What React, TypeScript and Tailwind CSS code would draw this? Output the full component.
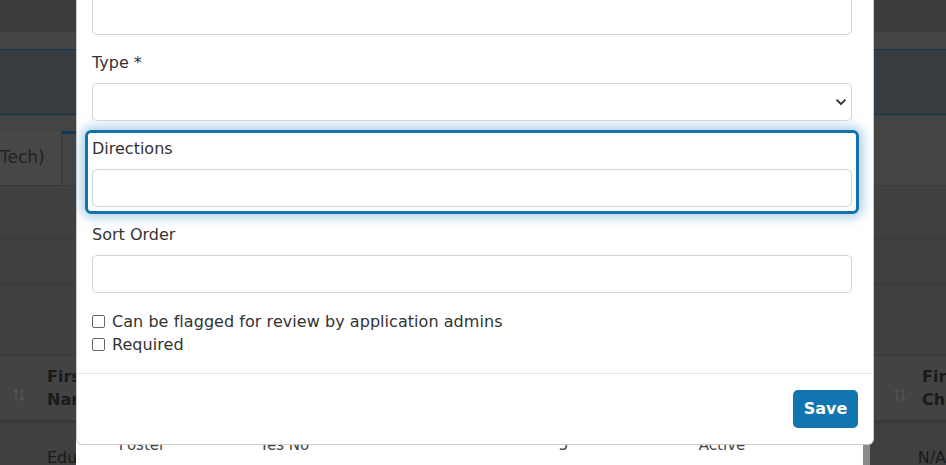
import React from "react";

function SortArrows({ className }: { className?: string }) {
  return (
    <svg className={className} width="14" height="14" viewBox="0 0 14 14" fill="none" stroke="#5a5a5a" strokeWidth="1">
      <path d="M4 13V1.5M1.5 4L4 1.5L6.5 4" />
      <path d="M10 1v11.5M7.5 10L10 12.5L12.5 10" />
    </svg>
  );
}

function Group({ label, focused, children }: { label: string; focused?: boolean; children: React.ReactNode }) {
  return (
    <div
      className={
        focused
          ? "border-[3px] border-[#1373b1] rounded-[6px] p-1 shadow-[0_0_12px_3px_rgba(19,115,177,0.38)]"
          : "border-[3px] border-transparent rounded-[6px] p-1"
      }
    >
      <div className="text-[16px] leading-6 text-[#333] mb-2">{label}</div>
      {children}
    </div>
  );
}

function Input() {
  return <div className="h-[38px] w-full border border-[#ced4da] rounded-[5px] bg-white" />;
}

function Check({ label }: { label: string }) {
  return (
    <div className="flex items-center pl-[7px] h-[23px]">
      <div className="w-[13px] h-[13px] border border-[#666] rounded-[2px] bg-white" />
      <span className="ml-[7px] text-[16px] leading-[23px] text-[#333] whitespace-nowrap tracking-[0.05px]">{label}</span>
    </div>
  );
}

export default function App() {
  return (
    <div className="relative w-[946px] h-[465px] overflow-hidden bg-[#404040] font-['DejaVu_Sans',sans-serif]">
      {/* background page (dimmed) */}
      <div className="flex flex-col">
        <div className="h-[32px] bg-[#3c3c3c]" />
        <div className="h-[17px] bg-[#454545]" />
        <div className="h-[66px] bg-[#363c40] border-y border-[#0f3551]" />
        <div className="h-[16px] bg-[#444444]" />
        <div className="h-[55px] flex bg-[#444444] border-b border-[#393939]">
          <div className="w-[62px] flex items-center border-r border-[#3a3a3a] bg-[#474747] overflow-hidden">
            <span className="text-[17px] font-medium text-[#222] whitespace-nowrap">Tech)</span>
          </div>
          <div className="w-[14px] border-t-[3px] border-[#0e3a57]" />
        </div>
        <div className="h-[53px] border-b border-[#383838]" />
        <div className="h-[45px] border-b border-[#383838]" />
        <div className="h-[72px] border-b border-[#383838]" />
        <div className="h-[67px] flex bg-[#434343] border-b-[3px] border-[#393939]">
          <div className="w-[76px] flex items-center relative">
            <SortArrows className="absolute left-[12px] top-[32px]" />
            <div className="ml-[47px] text-[16px] leading-[23px] font-semibold text-[#1a1a1a] whitespace-nowrap">
              First
              <br />
              Name
            </div>
          </div>
          <div className="flex-1" />
          <div className="w-[70px] flex items-center relative">
            <SortArrows className="absolute left-[17px] top-[32px]" />
            <div className="ml-[46px] text-[16px] leading-[23px] font-semibold text-[#1a1a1a] whitespace-nowrap">
              First
              <br />
              Cho
            </div>
          </div>
        </div>
        <div className="h-[42px] flex">
          <div className="w-[76px] pl-[47px] pt-[25px] text-[16px] leading-5 text-[#1a1a1a] overflow-hidden whitespace-nowrap">Edu</div>
          <div className="w-[791px] bg-white relative text-[15px] leading-5 text-[#444]">
            <span className="absolute left-[43px] top-[12px]">Foster</span>
            <span className="absolute left-[184px] top-[12px]">Yes No</span>
            <span className="absolute left-[483px] top-[12px]">5</span>
            <span className="absolute left-[623px] top-[12px]">Active</span>
            <span className="absolute left-[730px] top-[6px] font-bold tracking-[-2px]">•••</span>
          </div>
          <div className="w-[7px] bg-[#8a8a8a]" />
          <div className="flex-1 pl-[48px] pt-[25px] text-[16px] leading-5 text-[#1a1a1a] whitespace-nowrap">N/A</div>
        </div>
      </div>

      {/* modal */}
      <div className="absolute left-[76px] top-[-58px] w-[798px] bg-white border border-black/20 rounded-[6px]">
        <div className="pl-[8px] pr-[14px] pt-[15px] pb-[17px]">
          <div className="flex flex-col gap-[2px]">
            <Group label="Name *">
              <Input />
            </Group>
            <Group label="Type *">
              <div className="relative h-[38px] w-full border border-[#ced4da] rounded-[5px] bg-white">
                <svg className="absolute right-[5px] top-[15px]" width="10" height="7" viewBox="0 0 10 7" fill="none" stroke="#343a40" strokeWidth="2" strokeLinecap="round" strokeLinejoin="round">
                  <path d="M1.2 1.3L5 5.1L8.8 1.3" />
                </svg>
              </div>
            </Group>
            <Group label="Directions" focused>
              <Input />
            </Group>
            <Group label="Sort Order">
              <Input />
            </Group>
          </div>
          <div className="mt-[10px] flex flex-col">
            <Check label="Can be flagged for review by application admins" />
            <Check label="Required" />
          </div>
        </div>
        <div className="border-t border-[#e3e5e8] flex justify-end pt-4 pb-4 pr-[15px]">
          <button className="h-[38px] w-[65px] rounded-[5px] bg-[#1275b1] text-white text-[16px] font-bold">Save</button>
        </div>
      </div>
    </div>
  );
}
